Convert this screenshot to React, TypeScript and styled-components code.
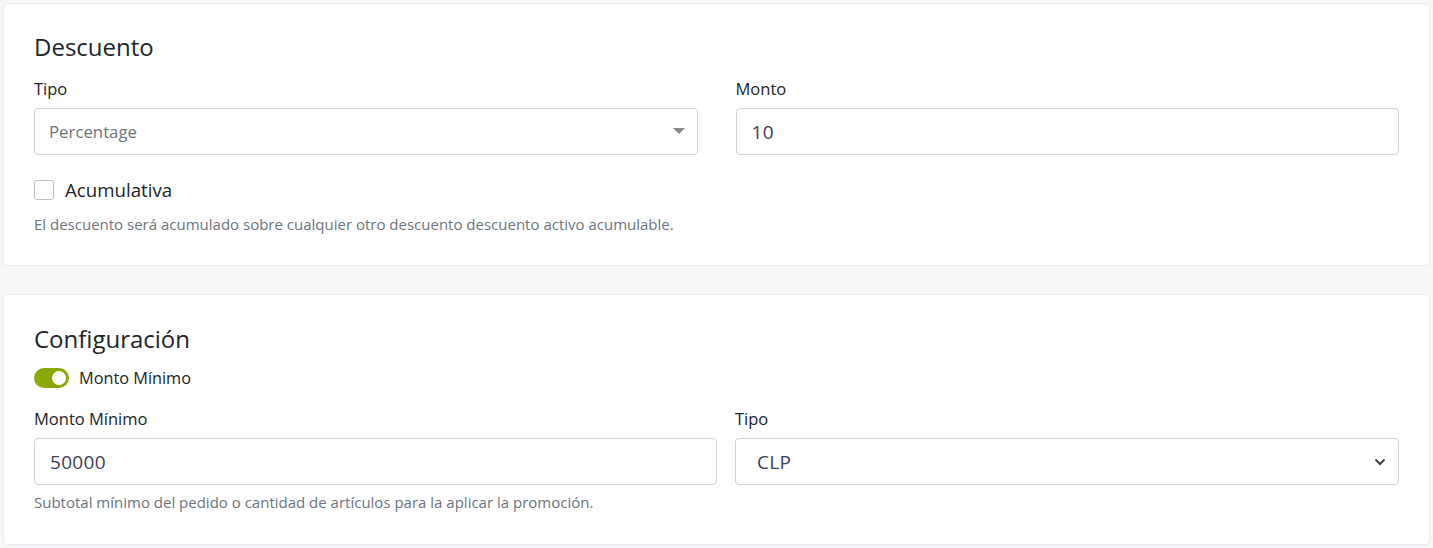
import React from "react";
import styled, { createGlobalStyle } from "styled-components";

const Global = createGlobalStyle`
  html, body { margin: 0; padding: 0; background: #f6f7f9; }
  body { font-family: "Open Sans", "Noto Sans", sans-serif; color: #212529; }
  * { box-sizing: border-box; }
`;

const Page = styled.div`
  display: flex;
  flex-direction: column;
  gap: 30px;
  padding: 4px 4px 0 4px;
  width: 1433px;
  height: 548px;
  overflow: hidden;
`;

const Card = styled.section<{ $pad: string }>`
  background: #fff;
  border-radius: 4px;
  box-shadow: 0 0 0 1px #eaecef, 0 1px 2px rgba(0, 0, 0, 0.07);
  padding: ${(p) => p.$pad};
  width: 1425px;
`;

const Title = styled.h2`
  margin: 0;
  font-size: 24px;
  font-weight: 400;
  line-height: 28px;
  color: #212529;
`;

const Row = styled.div<{ $cols: string; $gap: string; $mt?: string }>`
  display: grid;
  grid-template-columns: ${(p) => p.$cols};
  gap: ${(p) => p.$gap};
  margin-top: ${(p) => p.$mt || "0"};
`;

const Field = styled.div`
  display: flex;
  flex-direction: column;
`;

const Label = styled.label`
  font-size: 16.5px;
  line-height: 20px;
  color: #212529;
  margin-bottom: 9px;
`;

const Box = styled.div<{ $pl: string }>`
  height: 47px;
  border: 1px solid #ced4da;
  border-radius: 4px;
  display: flex;
  align-items: center;
  justify-content: space-between;
  padding: 0 12px 0 ${(p) => p.$pl};
  background: #fff;
`;

const Value = styled.span<{ $muted?: boolean }>`
  font-size: ${(p) => (p.$muted ? "16.8px" : "19px")};
  color: ${(p) => (p.$muted ? "#6c757d" : "#3b4157")};
  letter-spacing: ${(p) => (p.$muted ? "0" : "0.3px")};
`;

const CheckRow = styled.div`
  display: flex;
  align-items: center;
  gap: 11px;
  margin-top: 22px;
`;

const CheckBox = styled.span`
  width: 20px;
  height: 20px;
  border: 1px solid #b9bec4;
  border-radius: 3px;
  background: #fff;
`;

const CheckLabel = styled.span`
  font-size: 18.7px;
  color: #212529;
`;

const Help = styled.p<{ $mt: string }>`
  margin: ${(p) => p.$mt} 0 0 0;
  font-size: 15px;
  line-height: 18px;
  color: #6c757d;
`;

const ToggleRow = styled.div`
  display: flex;
  align-items: center;
  gap: 10px;
  margin-top: 14px;
  margin-bottom: 20px;
`;

const Track = styled.span`
  position: relative;
  width: 35px;
  height: 20px;
  border-radius: 10px;
  background: #8aa808;
`;

const Knob = styled.span`
  position: absolute;
  right: 3px;
  top: 3px;
  width: 14px;
  height: 14px;
  border-radius: 50%;
  background: #fff;
`;

const ToggleLabel = styled.span`
  font-size: 16.3px;
  color: #212529;
`;

const Caret = () => (
  <svg width="12" height="7" viewBox="0 0 12 7">
    <path d="M0 0 L12 0 L6 6 Z" fill="#888" />
  </svg>
);

const Chevron = () => (
  <svg width="12" height="8" viewBox="0 0 12 8">
    <path d="M1.5 1.5 L6 6 L10.5 1.5" fill="none" stroke="#3d434a" strokeWidth="2" />
  </svg>
);

export default function App() {
  return (
    <>
      <Global />
      <Page>
        <Card $pad="29px 30px 32px 30px">
          <Title>Descuento</Title>
          <Row $cols="1fr 1fr" $gap="38px" $mt="18px">
            <Field>
              <Label>Tipo</Label>
              <Box $pl="14px">
                <Value $muted>Percentage</Value>
                <Caret />
              </Box>
            </Field>
            <Field>
              <Label>Monto</Label>
              <Box $pl="15px">
                <Value>10</Value>
              </Box>
            </Field>
          </Row>
          <CheckRow>
            <CheckBox />
            <CheckLabel>Acumulativa</CheckLabel>
          </CheckRow>
          <Help $mt="13px">
            El descuento será acumulado sobre cualquier otro descuento descuento activo acumulable.
          </Help>
        </Card>
        <Card $pad="30px 30px 33px 30px">
          <Title>Configuración</Title>
          <ToggleRow>
            <Track>
              <Knob />
            </Track>
            <ToggleLabel>Monto Mínimo</ToggleLabel>
          </ToggleRow>
          <Row $cols="683px 1fr" $gap="18px">
            <Field>
              <Label>Monto Mínimo</Label>
              <Box $pl="15px">
                <Value>50000</Value>
              </Box>
            </Field>
            <Field>
              <Label>Tipo</Label>
              <Box $pl="21px">
                <Value>CLP</Value>
                <Chevron />
              </Box>
            </Field>
          </Row>
          <Help $mt="8px">
            Subtotal mínimo del pedido o cantidad de artículos para la aplicar la promoción.
          </Help>
        </Card>
      </Page>
    </>
  );
}
